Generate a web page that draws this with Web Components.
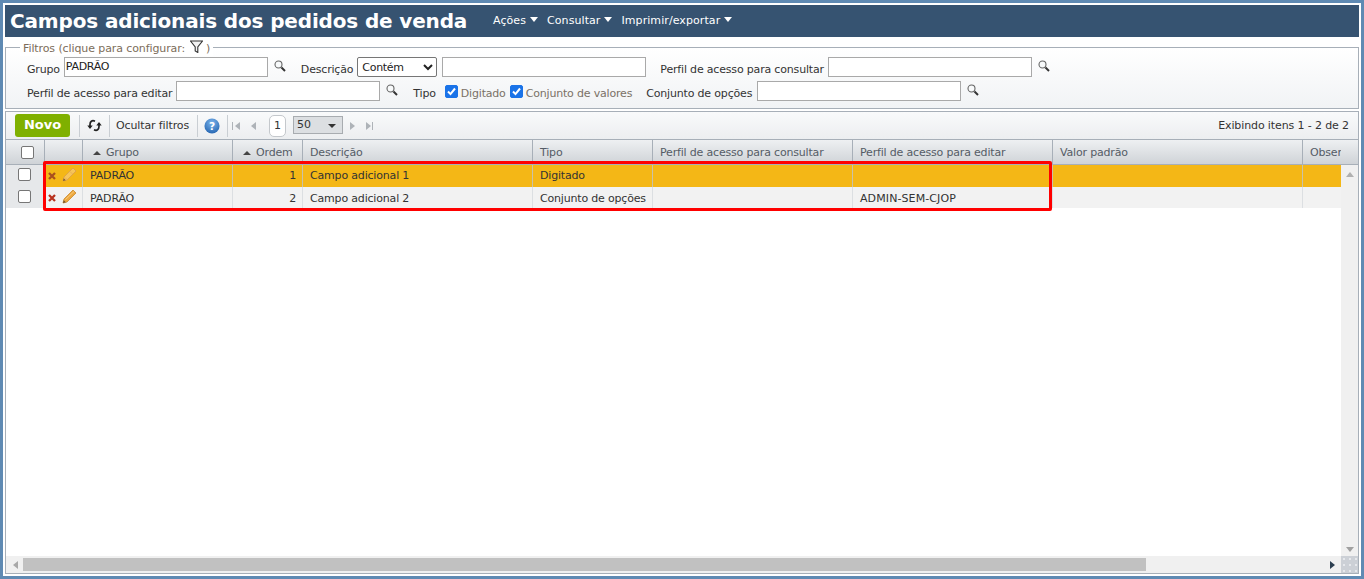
<!DOCTYPE html>
<html lang="pt"><head><meta charset="utf-8"><title>Campos adicionais</title>
<style>
html,body{margin:0;height:579px;overflow:hidden;background:#5f8ab3}
body{padding:3px;box-sizing:border-box;font:11px/14px "DejaVu Sans",sans-serif;color:#333}
</style></head><body>
<app-shell>
  <page-header title-text="Campos adicionais dos pedidos de venda">
    <menu-item>Ações</menu-item><menu-item>Consultar</menu-item><menu-item>Imprimir/exportar</menu-item>
  </page-header>
  <filter-panel></filter-panel>
  <grid-view></grid-view>
</app-shell>
<script>
const el=(name,cls)=>customElements.define(name,cls);
const mk=(host,html)=>{host.attachShadow({mode:'open'}).innerHTML=html};
const FONT='"DejaVu Sans",sans-serif';
const lens=`<svg width="12" height="12" viewBox="0 0 12 12" fill="none"><circle cx="4.500" cy="4.500" r="3.500" stroke="#666" stroke-width="1.100" fill="#f8fafb"/><path d="M7.500 7.500l3.500 3.500" stroke="#333" stroke-width="2"/></svg>`;

el('app-shell',class extends HTMLElement{constructor(){super();mk(this,`<style>
:host{display:flex;flex-direction:column;width:1358px;height:573px;background:#fff;padding:2px 2px 2px 2px;box-sizing:border-box}
</style><slot></slot>`)}});

el('page-header',class extends HTMLElement{constructor(){super();mk(this,`<style>
:host{display:flex;align-items:center;height:32px;background:#365371;color:#fff;flex:none;padding-left:5px}
h1{margin:0;font:bold 20px/32px "DejaVu Sans",sans-serif;width:483px;white-space:nowrap;letter-spacing:-.15px}
nav{display:flex;gap:9px}
</style><h1>${this.getAttribute('title-text')}</h1><nav><slot></slot></nav>`)}});

el('menu-item',class extends HTMLElement{constructor(){super();mk(this,`<style>
:host{display:inline-flex;align-items:center;gap:4px;color:#fff;font:11px/14px ${FONT};letter-spacing:.08px}
i{width:0;height:0;border:4.500px solid transparent;border-top:5px solid #fff;border-bottom:0;margin-top:-3px}
</style><slot></slot><i></i>`)}});

el('search-field',class extends HTMLElement{constructor(){super();const w=this.getAttribute('w')||204,v=this.getAttribute('value')||'';mk(this,`<style>
:host{display:inline-flex;align-items:center;gap:6px}
div{box-sizing:border-box;width:${w}px;height:20px;background:#fff;border:1px solid #a9a9a9;padding:1px 0 1px 1px;font:11px/16px ${FONT};letter-spacing:-.3px;color:#222}
svg{display:block;margin:-2px 0 0 0}
</style><div>${v}</div>${this.hasAttribute('nolens')?'':lens}`)}});

el('f-label',class extends HTMLElement{constructor(){super();mk(this,`<style>
:host{display:inline-block;font:11px/14px ${FONT};letter-spacing:-.18px;color:#333;white-space:nowrap;padding-top:5px}
</style><slot></slot>`)}});

el('check-box',class extends HTMLElement{constructor(){super();const c=this.hasAttribute('checked');mk(this,`<style>
:host{display:inline-block;width:13px;height:13px;line-height:0}
b{display:block;box-sizing:border-box;width:13px;height:13px;border-radius:2px;background:${c?'#1a73e8':'#fff'};border:1px solid ${c?'#1a73e8':'#767676'}}
svg{display:block}
</style><b>${c?'<svg width="11" height="11" viewBox="0 0 11 11"><path d="M2 5.500l2.500 2.600L9 2.500" fill="none" stroke="#fff" stroke-width="2"/></svg>':''}</b>`)}});

el('filter-panel',class extends HTMLElement{constructor(){super();mk(this,`<style>
:host{display:block;flex:none;margin-top:10px;height:62px;box-sizing:border-box;border:1px solid #a7afb8;position:relative;background:linear-gradient(#fff,#f1f3f5)}
.legend{position:absolute;left:14px;top:-6px;display:flex;align-items:center;padding:0 3px;background:#fff;font:11px/14px ${FONT};letter-spacing:-.1px;color:#7c6d5a;height:14px;white-space:nowrap}
.legend svg{margin:-5px 3px 0 5px}
.rows{display:flex;flex-direction:column;gap:4px;padding:9px 0 0 0}
.r{display:flex;align-items:center;height:20px;white-space:nowrap}
.r>*{flex:none}
select{appearance:auto;box-sizing:border-box;width:80px;height:20px;font:11px ${FONT};letter-spacing:-.3px;background:#fff;border:1px solid #767676;border-radius:2px;padding:0;color:#222}
.sp{display:inline-block}
check-box{margin:0 3px 0 0}
.g{color:#7a7166}
</style>
<div class="legend">Filtros (clique para configurar:<svg width="13" height="13" viewBox="0 0 13 13"><path d="M.5 1h12L7.800 7v5.500L5.200 11V7z" fill="#f2f2f2" stroke="#333" stroke-width="1.100"/></svg>)</div>
<div class="rows">
<div class="r"><span class="sp" style="width:21px"></span><f-label>Grupo</f-label><span class="sp" style="width:4px"></span><search-field w="204" value="PADRÃO"></search-field><span class="sp" style="width:15px"></span><f-label>Descrição</f-label><span class="sp" style="width:4px"></span><select><option>Contém</option></select><span class="sp" style="width:5px"></span><search-field w="204" nolens></search-field><span class="sp" style="width:14px"></span><f-label>Perfil de acesso para consultar</f-label><span class="sp" style="width:4px"></span><search-field w="204"></search-field></div>
<div class="r"><span class="sp" style="width:21px"></span><f-label>Perfil de acesso para editar</f-label><span class="sp" style="width:4px"></span><search-field w="204"></search-field><span class="sp" style="width:15px"></span><f-label>Tipo</f-label><span class="sp" style="width:9px"></span><check-box checked></check-box><f-label><span class="g">Digitado</span></f-label><span class="sp" style="width:4px"></span><check-box checked></check-box><f-label><span class="g">Conjunto de valores</span></f-label><span class="sp" style="width:14px"></span><f-label>Conjunto de opções</f-label><span class="sp" style="width:5px"></span><search-field w="204"></search-field></div>
</div>`);
this.shadowRoot.querySelectorAll('.g').forEach(n=>n.style.color='#7a7166');}});

el('grid-toolbar',class extends HTMLElement{constructor(){super();mk(this,`<style>
:host{display:flex;align-items:center;height:27px;box-sizing:border-box;background:linear-gradient(#f9fafb,#eceef0);font:11px/14px ${FONT};letter-spacing:-.12px;color:#333;flex:none;white-space:nowrap}
.novo{margin-left:9px;width:55px;height:23px;background:#7fb000;border-radius:3px;color:#fff;font:bold 13px/22px ${FONT};text-align:center;letter-spacing:0;flex:none}
.sep{width:1px;height:22px;background:#c9ced3;flex:none}
.p{display:flex;align-items:center}
.pg{box-sizing:border-box;width:17px;height:22px;border:1px solid #c4c8cc;border-radius:5px;background:#fff;text-align:center;line-height:20px;margin:0 7px 0 13px}
.sel{box-sizing:border-box;width:50px;height:18px;border:1px solid #a8acb0;background:#dcdfe2;padding:1px 0 0 3px;line-height:14px;position:relative;margin-top:-1px}
.sel i{position:absolute;right:6px;top:7px;border:4px solid transparent;border-top:4px solid #333;border-bottom:0}
.tri{display:inline-block;border:4px solid transparent;border-left:0;border-right:5px solid #aeb3b8}
.tr{border-right:0;border-left:5px solid #aeb3b8}
.bar{display:inline-block;width:1px;height:8px;background:#aeb3b8}
.end{margin-left:auto;margin-right:9px}
</style>
<div class="novo">Novo</div>
<span style="width:9px"></span><div class="sep"></div>
<svg style="margin:0 7px" width="15" height="13" viewBox="0 0 15 13" fill="none" stroke="#222" stroke-width="1.700"><path d="M8 2.200C5 .8 3 2.500 3 5.500V9"/><path d="M.3 6.500L3 10l2.700-3.500z" fill="#222" stroke="none"/><path d="M7 10.800c3 1.400 5-.3 5-3.300V4"/><path d="M9.300 6.500L12 3l2.700 3.500z" fill="#222" stroke="none"/></svg>
<div class="sep"></div><span style="margin:0 6px;width:75px;flex:none">Ocultar filtros</span><div class="sep"></div>
<svg style="margin:0 7px 0 6px;flex:none" width="16" height="16" viewBox="0 0 18 18"><defs><radialGradient id="h" cx=".5" cy=".3" r=".8"><stop offset="0" stop-color="#7db5ec"/><stop offset="1" stop-color="#1a5cab"/></radialGradient></defs><circle cx="9" cy="9" r="8.500" fill="url(#h)"/><text x="9" y="13.500" font-family="DejaVu Sans" font-weight="bold" font-size="12" fill="#fff" text-anchor="middle">?</text></svg>
<div class="sep"></div>
<div class="p" style="margin-left:4px"><span class="bar"></span><span class="tri" style="margin-left:2px"></span><span class="tri" style="margin-left:11px"></span><span class="pg">1</span><span class="sel">50<i></i></span><span class="tri tr" style="margin-left:7px"></span><span class="tri tr" style="margin-left:11px"></span><span class="bar" style="margin-left:1px"></span></div>
<span class="end">Exibindo itens 1 - 2 de 2</span>`)}});

const COLS='39px 38px 150px 70px 230px 120px 200px 200px 250px 200px';
el('grid-row',class extends HTMLElement{constructor(){super();const cells=JSON.parse(this.getAttribute('cells'));const sel=this.hasAttribute('selected');
mk(this,`<style>
:host{display:grid;grid-template-columns:${COLS};height:${sel?22:21}px;background:${sel?'#f4b716':'#f2f2f2'};font:11px/14px ${FONT};letter-spacing:-.18px;color:#333;white-space:nowrap}
.c{box-sizing:border-box;border-right:1px solid ${sel?'#c9c2a8':'#dcdfe2'};padding:${sel?4:5}px 0 0 7px;overflow:hidden;height:100%}
.n{text-align:right;padding-right:6px;padding-left:0}
.w{letter-spacing:.1px}
.k{background:#e6e8ea;border-right:0;padding:3px 0 0 12px}
.k b{display:block;box-sizing:border-box;width:13px;height:13px;background:#fff;border:1px solid #767676;border-radius:2px}
.a{padding:0 0 0 3px;display:flex;align-items:center;gap:5px}
</style>
<div class="c k"><b></b></div>
<div class="c a"><svg width="8" height="8" viewBox="0 0 8 8"><path d="M1 1l6 6M7 1L1 7" stroke="${sel?'#a9501f':'#b8321e'}" stroke-width="2.300"/></svg><svg width="16" height="16" viewBox="0 0 16 16" style="margin-top:-2px">${sel?'<path d="M2 14l1-4L12 1l3 3-9 9z" fill="#f7c558" stroke="#dca04a" stroke-width=".9"/><path d="M4 10.500l2 2M9 4.500l2.500 2.500" stroke="#e3aa58" stroke-width=".8"/><path d="M2 14l.7-2.800 2.100 2.100z" fill="#7a5a30"/>':'<path d="M2 14l1-4L12 1l3 3-9 9z" fill="#eda83f" stroke="#c98a2e" stroke-width=".8"/><path d="M4.500 10.500L13 2.500" stroke="#f8cf85" stroke-width=".9"/><path d="M2 14l.7-2.800 2.100 2.100z" fill="#6b5030"/>'}</svg></div>
${cells.map((t,i)=>`<div class="c ${i==1?'n':''} ${t.startsWith('ADMIN')?'w':''}">${t}</div>`).join('')}`)}});

el('grid-view',class extends HTMLElement{constructor(){super();
const heads=[['Grupo',1],['Ordem',1],['Descrição'],['Tipo'],['Perfil de acesso para consultar'],['Perfil de acesso para editar'],['Valor padrão'],['Obser']];
mk(this,`<style>
:host{display:flex;flex-direction:column;flex:1;min-height:0;margin-top:2px;border:1px solid #a7afb8;position:relative;box-sizing:border-box}
.main{flex:1;position:relative;overflow:hidden;display:flex;min-height:0}
.body{flex:1;overflow:hidden;min-width:0;background:#fff}
.hd{display:grid;grid-template-columns:${COLS};height:26px;box-sizing:border-box;background:linear-gradient(#eef0f2,#cfd3d7);border-top:1px solid #a7afb8;border-bottom:1px solid #a7afb8;font:11px/14px ${FONT};letter-spacing:-.18px;color:#555c66;white-space:nowrap}
.hd div{box-sizing:border-box;border-right:1px solid #a7afb8;padding:6px 0 0 7px;overflow:hidden;display:flex;align-items:flex-start}
.hd i{width:0;height:0;border:4px solid transparent;border-bottom:4px solid #444;border-top:0;margin:5px 5px 0 3px;flex:none}
.hd b{display:block;box-sizing:border-box;width:13px;height:13px;background:#fff;border:1px solid #767676;border-radius:2px;margin:0 0 0 8px}
.vs{width:17px;flex:none;background:#f0f0f0;position:relative;display:flex;flex-direction:column;justify-content:space-between;align-items:center}
.vh{height:26px;box-sizing:border-box;width:17px;background:linear-gradient(#eef0f2,#cfd3d7);border-top:1px solid #a7afb8;border-bottom:1px solid #a7afb8}
.up{border:4px solid transparent;border-bottom:5px solid #b0b0b0;border-top:0;margin-top:7px}
.dn{border:4px solid transparent;border-top:5px solid #a0a0a0;border-bottom:0;margin-bottom:4px}
.hs{height:17px;flex:none;background:#f0f0f0;display:flex;align-items:center}
.l{border:4px solid transparent;border-right:5px solid #a8a8a8;border-left:0;margin:0 5px 0 7px}
.th{width:1123px;height:13px;background:#c1c1c1}
.rr{border:4px solid transparent;border-left:5px solid #2c3e50;border-right:0;margin-left:auto;margin-right:23px}
.cn{position:absolute;right:0;bottom:0;width:17px;height:17px;background:#ccd0d6 radial-gradient(circle,#e6e8ec 1px,transparent 1.200px) 0 0/6px 6px}
.mark{position:absolute;left:37px;top:49px;width:1009px;height:50px;box-sizing:border-box;border:3px solid #f00;border-radius:2px;pointer-events:none}
</style>
<grid-toolbar></grid-toolbar>
<div class="main">
<div class="body">
<div class="hd"><div><b></b></div><div></div>${heads.map(h=>`<div>${h[1]?'<i></i>':''}${h[0]}</div>`).join('')}</div>
<grid-row selected cells='["PADRÃO","1","Campo adicional 1","Digitado","","","",""]'></grid-row>
<grid-row cells='["PADRÃO","2","Campo adicional 2","Conjunto de opções","","ADMIN-SEM-CJOP","",""]'></grid-row>
</div>
<div class="vs"><div style="display:flex;flex-direction:column;align-items:center"><div class="vh"></div><div class="up"></div></div><div class="dn"></div></div>
</div>
<div class="hs"><span class="l"></span><div class="th"></div><span class="rr"></span></div>
<div class="cn"></div>
<div class="mark"></div>`)}});
</script>
</body></html>
